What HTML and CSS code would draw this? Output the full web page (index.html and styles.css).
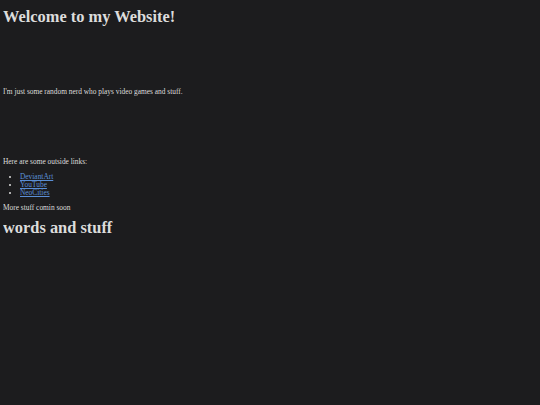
FILE: index.html
```html
<!DOCTYPE html>
<html>
<head>
<meta charset="utf-8">
<link rel="stylesheet" href="styles.css">
<title>Welcome</title>
</head>
<body>
<h1 class="title">Welcome to my Website!</h1>
<p class="intro">I'm just some random nerd who plays video games and stuff.</p>
<p class="links-label">Here are some outside links:</p>
<ul class="links">
<li><a href="#">DeviantArt</a></li>
<li><a href="#">YouTube</a></li>
<li><a href="#">NeoCities</a></li>
</ul>
<p class="more">More stuff comin soon</p>
<h1 class="sub">words and stuff</h1>
</body>
</html>
```
FILE: styles.css
```css
html, body {
  background: #1c1c1e;
}
body {
  margin: 3px;
  color: #dcdcdc;
  font-family: "Liberation Serif", "DejaVu Serif", serif;
  font-size: 7.4px;
  line-height: 8px;
}
.title, .sub {
  font-size: 16.4px;
  line-height: 20px;
}
.title {
  margin: 4px 0 0 0;
}
.intro {
  margin: 61px 0 0 0;
}
.links-label {
  margin: 62px 0 0 0;
}
.links {
  margin: 7px 0 0 0;
  padding-left: 17px;
}
.links a {
  color: #5b8fd6;
}
.more {
  margin: 7px 0 0 0;
}
.sub {
  margin: 6px 0 0 0;
}
```
